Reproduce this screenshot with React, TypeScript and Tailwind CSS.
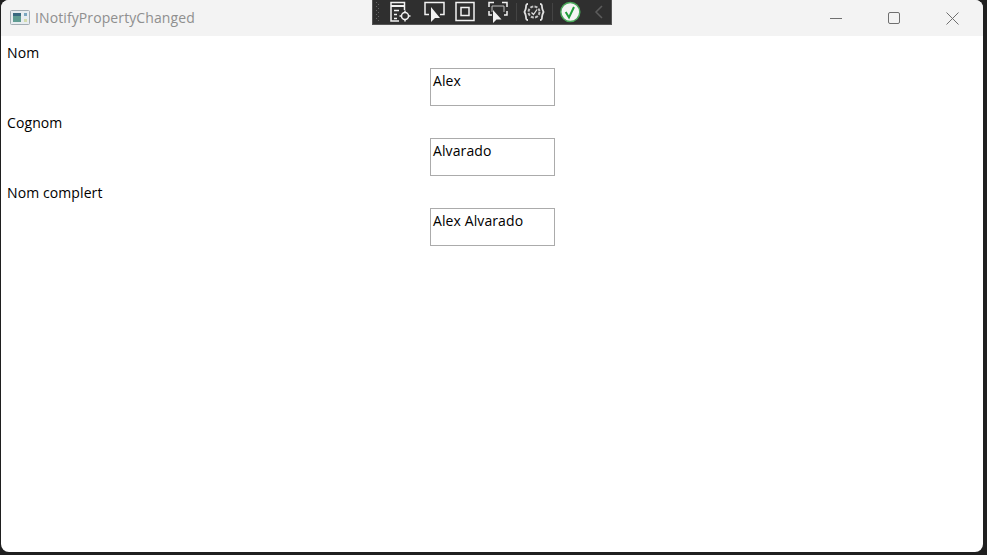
import React from "react";

const fields = [
  { label: "Nom", value: "Alex" },
  { label: "Cognom", value: "Alvarado" },
  { label: "Nom complert", value: "Alex Alvarado" },
];

const AppIcon = () => (
  <svg width="20" height="16" viewBox="0 0 20 16">
    <rect x="0.5" y="0.5" width="19" height="14" rx="1" fill="#e8edf0" stroke="#a3adb3" />
    <rect x="3" y="3" width="8" height="9" fill="#5f9c92" />
    <rect x="3" y="3" width="8" height="3" fill="#3a6a80" />
    <rect x="14" y="3" width="3" height="3" fill="#7ba7c0" />
    <rect x="14" y="9" width="3" height="3" fill="#d4dcae" />
  </svg>
);

const DebugToolbar = () => (
  <div className="absolute left-[372px] top-0 flex h-[25px] w-[240px] items-center border-x border-b border-[#555555] bg-[#2f2f2f]">
    <svg width="238" height="24" viewBox="0 0 238 24" fill="none" stroke="#f2f2f2" strokeWidth="1.5">
      {/* grip */}
      <g fill="#666666" stroke="none">
        <rect x="3" y="2" width="1" height="1" />
        <rect x="5" y="4" width="1" height="1" />
        <rect x="3" y="6" width="1" height="1" />
        <rect x="5" y="8" width="1" height="1" />
        <rect x="3" y="10" width="1" height="1" />
        <rect x="5" y="12" width="1" height="1" />
        <rect x="3" y="14" width="1" height="1" />
        <rect x="5" y="16" width="1" height="1" />
        <rect x="3" y="18" width="1" height="1" />
        <rect x="5" y="20" width="1" height="1" />
      </g>
      {/* live tree */}
      <path d="M26 21h-8V2.500h13.500V10" />
      <path d="M18 6h13.500" strokeWidth="2" />
      <path d="M21 10.500h5M21 14.500h3M21 18.500h3" />
      <circle cx="32" cy="16" r="3.500" />
      <path d="M32 10.500v2M32 19.500v2M26.500 16h2M35.500 16h2" />
      {/* select element */}
      <path d="M56 14.500h-4V2.500h19v12h-4" />
      <path d="M58 7l0 15 4-4 5 0z" fill="#f2f2f2" stroke="none" />
      {/* layout adorners */}
      <rect x="83" y="2.500" width="18" height="18" />
      <rect x="88" y="7.500" width="8" height="8" />
      {/* track focus */}
      <path d="M116 7V2.500h5M129 2.500h5V7M116 11v4h3M134 11v4h-3" />
      <path d="M119 6h12M119 12V6M131 6v6" strokeWidth="1" stroke="#bdbdbd" />
      <path d="M120 10l0 13 3.500-3.500 5 0z" fill="#f2f2f2" stroke="none" />
      {/* separator */}
      <path d="M143.500 3v18" stroke="#444444" strokeWidth="1" />
      {/* binding failures */}
      <path d="M155 4c-2 0-2 1-2 3s-.5 3-1.500 5c1 2 1.500 3 1.500 5s0 3 2 3M167 4c2 0 2 1 2 3s.5 3 1.500 5c-1 2-1.500 3-1.500 5s0 3-2 3" stroke="#e0e0e0" strokeWidth="1.800" />
      <circle cx="161" cy="12" r="5.500" stroke="#c4c4c4" strokeWidth="2" strokeDasharray="3 1.300" />
      <path d="M158.500 12.500l2 2 3.500-5" stroke="#e0e0e0" strokeWidth="1.300" />
      {/* separator */}
      <path d="M179.500 3v18" stroke="#444444" strokeWidth="1" />
      {/* status */}
      <circle cx="197.300" cy="12" r="9.500" fill="#f4f4f4" stroke="#4aa85a" strokeWidth="1.500" />
      <path d="M192.700 12l3.300 5.500 5-10.500" stroke="#1f9e3a" strokeWidth="2" />
      {/* collapse */}
      <path d="M229 6l-6 6 6 6" stroke="#5c5c5c" strokeWidth="1.500" />
    </svg>
  </div>
);

const App = () => {
  return (
    <div className="relative h-[555px] w-[987px] overflow-hidden bg-[#1f1f1f] pb-[3px] pl-px pr-1 font-['Open_Sans',sans-serif]">
      <div className="flex h-full flex-col overflow-hidden rounded-lg bg-white">
        {/* Title bar */}
        <div className="flex h-9 shrink-0 items-center bg-[#f3f3f3]">
          <div className="ml-[9px] mr-[5px] flex">
            <AppIcon />
          </div>
          <span className="text-sm tracking-[0.1px] text-[#8f8f8f]">INotifyPropertyChanged</span>
          <div className="ml-auto flex items-center text-[#6f6f6f]">
            <svg className="mr-[46px]" width="12" height="12" viewBox="0 0 12 12" stroke="currentColor">
              <path d="M0 6.500h12" />
            </svg>
            <svg className="mr-[46px]" width="12" height="12" viewBox="0 0 12 12" fill="none" stroke="currentColor">
              <rect x="0.500" y="0.500" width="11" height="11" rx="1.500" />
            </svg>
            <svg className="mr-6" width="13" height="13" viewBox="0 0 13 13" stroke="currentColor">
              <path d="M0.500 0.500l12 12M12.500 0.500l-12 12" />
            </svg>
          </div>
        </div>

        {/* Fields */}
        <div className="flex flex-col pl-[6px] pt-[5px]">
          {fields.map((field) => (
            <div key={field.label} className="flex h-[70px] flex-col">
              <span className="h-[27px] text-sm leading-6 tracking-[0.1px] text-black">{field.label}</span>
              <div className="ml-[423px] h-[38px] w-[125px] border border-[#ababab] px-[2px] text-sm leading-6 tracking-[0.1px] text-black">
                {field.value}
              </div>
            </div>
          ))}
        </div>
      </div>

      <DebugToolbar />
    </div>
  );
};

export default App;
